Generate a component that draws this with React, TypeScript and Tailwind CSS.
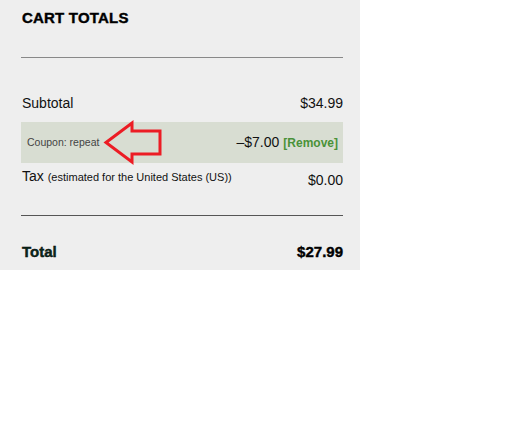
import React from "react";

function Arrow() {
  return (
    <svg width="62" height="46" viewBox="0 0 62 46" className="absolute left-[81px] top-[-2px]">
      <polygon
        points="4,22.5 30,3 30,11 58,11 58,34 30,34 30,42"
        fill="none"
        stroke="#ec1c24"
        strokeWidth="3"
        strokeLinejoin="miter"
      />
    </svg>
  );
}

export default function App() {
  return (
    <div className="h-[436px] w-[520px] bg-white font-['Liberation_Sans',Arial,sans-serif]">
      <div className="h-[270px] w-[360px] bg-[#eeeeee] pl-[21px] pr-[17px]">
        <h2 className="pt-[9px] pl-px text-[15px] font-bold leading-[18px] tracking-[0.2px] text-black [-webkit-text-stroke:0.4px_black]">
          CART TOTALS
        </h2>
        <div className="mt-[30px] h-px bg-[#888888]" />
        <div className="flex h-[64px] items-center justify-between pt-[28px] pl-px text-[14px] text-[#111]">
          <span className="pb-[2px]">Subtotal</span>
          <span className="pb-[2px]">$34.99</span>
        </div>
        <div className="relative flex h-[41px] items-center justify-between bg-[#d8ddd2] pl-[6px] pr-[5px]">
          <span className="text-[10.5px] text-[#444]">Coupon: repeat</span>
          <Arrow />
          <span className="flex items-center gap-[4px]">
            <span className="text-[14px] text-[#111]">–$7.00</span>
            <span className="text-[12px] font-bold text-[#4a9239]">[Remove]</span>
          </span>
        </div>
        <div className="flex items-start justify-between pt-[4px] pl-px">
          <span className="text-[14px] leading-[18px] text-[#111]">
            Tax <span className="text-[11px]">(estimated for the United States (US))</span>
          </span>
          <span className="pt-[4px] text-[14px] leading-[18px] text-[#111]">$0.00</span>
        </div>
        <div className="mt-[26px] h-px bg-[#555555]" />
        <div className="flex items-center justify-between pt-[27px] pl-px text-[15px] font-bold leading-[18px] text-black [-webkit-text-stroke:0.4px_black]">
          <span className="text-[#0b2a1c]">Total</span>
          <span>$27.99</span>
        </div>
      </div>
    </div>
  );
}
